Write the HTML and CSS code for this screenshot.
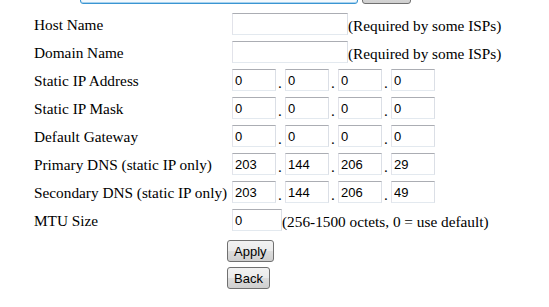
FILE: index.html
```html
<!DOCTYPE html>
<html lang="en">
<head>
    <meta charset="UTF-8">
    <title>WAN Setup</title>
    <link rel="stylesheet" href="styles.css">
</head>
<body>
    <div class="page">
        <!-- tail end of the section above, scrolled mostly out of view -->
        <div class="topbar">
            <div class="focus-field"></div>
            <button class="btn top-btn" type="button"></button>
        </div>

        <div class="form">
            <div class="row">
                <div class="label">Host Name</div>
                <div class="field"><input class="box wide" type="text"><span class="hint">(Required by some ISPs)</span></div>
            </div>
            <div class="row">
                <div class="label">Domain Name</div>
                <div class="field"><input class="box wide" type="text"><span class="hint">(Required by some ISPs)</span></div>
            </div>
            <div class="row">
                <div class="label">Static IP Address</div>
                <div class="field">
                    <input class="box ip" value="0"><span class="dot">.</span><input class="box ip" value="0"><span class="dot">.</span><input class="box ip" value="0"><span class="dot">.</span><input class="box ip" value="0">
                </div>
            </div>
            <div class="row">
                <div class="label">Static IP Mask</div>
                <div class="field">
                    <input class="box ip" value="0"><span class="dot">.</span><input class="box ip" value="0"><span class="dot">.</span><input class="box ip" value="0"><span class="dot">.</span><input class="box ip" value="0">
                </div>
            </div>
            <div class="row">
                <div class="label">Default Gateway</div>
                <div class="field">
                    <input class="box ip" value="0"><span class="dot">.</span><input class="box ip" value="0"><span class="dot">.</span><input class="box ip" value="0"><span class="dot">.</span><input class="box ip" value="0">
                </div>
            </div>
            <div class="row">
                <div class="label">Primary DNS (static IP only)</div>
                <div class="field">
                    <input class="box ip" value="203"><span class="dot">.</span><input class="box ip" value="144"><span class="dot">.</span><input class="box ip" value="206"><span class="dot">.</span><input class="box ip" value="29">
                </div>
            </div>
            <div class="row">
                <div class="label">Secondary DNS (static IP only)</div>
                <div class="field">
                    <input class="box ip" value="203"><span class="dot">.</span><input class="box ip" value="144"><span class="dot">.</span><input class="box ip" value="206"><span class="dot">.</span><input class="box ip" value="49">
                </div>
            </div>
            <div class="row">
                <div class="label">MTU Size</div>
                <div class="field"><input class="box mtu" value="0"><span class="hint">(256-1500 octets, 0 = use default)</span></div>
            </div>

            <div class="actions">
                <button class="btn" type="button">Apply</button>
                <button class="btn" type="button">Back</button>
            </div>
        </div>
    </div>
</body>
</html>
```

FILE: styles.css
```css
body {
    margin: 0;
    background: #ffffff;
    color: #000000;
    font-family: 'Liberation Serif', 'Times New Roman', serif;
    font-size: 15.3px;
}
.page {
    padding-left: 34px;
}
.topbar {
    display: flex;
    gap: 4px;
    margin-top: -18px;
    margin-left: 46px;
    margin-bottom: 6px;
    height: 22px;
}
.focus-field {
    width: 276px;
    border: 1px solid #3a95d2;
    border-radius: 3px;
    background: #f4f9fd;
    box-shadow: inset 0 -1px 0 #a8d2ee;
}
.top-btn {
    width: 49px;
}
.row {
    display: grid;
    grid-template-columns: 198px auto;
    align-items: center;
    height: 28px;
}
.label {
    line-height: 17px;
}
.field {
    display: flex;
    align-items: flex-end;
}
.box {
    box-sizing: border-box;
    height: 22px;
    margin: 0;
    padding: 0 2px;
    border: 1px solid;
    border-color: #abadb3 #dbdfe6 #e3e9ef #e2e3ea;
    background: #ffffff;
    font-family: 'Liberation Sans', Arial, sans-serif;
    font-size: 13px;
    color: #000000;
    outline: none;
}
.wide {
    width: 116px;
}
.ip {
    width: 44px;
}
.mtu {
    width: 50px;
}
.dot {
    width: 9px;
    padding-left: 2px;
    box-sizing: border-box;
    line-height: 17px;
}
.hint {
    line-height: 19px;
    white-space: nowrap;
}
.actions {
    display: flex;
    flex-direction: column;
    align-items: flex-start;
    gap: 5px;
    margin-top: 6px;
    margin-left: 193px;
}
.btn {
    box-sizing: border-box;
    height: 22px;
    margin: 0;
    padding: 0 6px;
    border: 1px solid #707070;
    border-radius: 3px;
    background: linear-gradient(#f2f2f2 0%, #ebebeb 50%, #dddddd 51%, #cfcfcf 100%);
    font-family: 'Liberation Sans', Arial, sans-serif;
    font-size: 13px;
    color: #000000;
}
```
